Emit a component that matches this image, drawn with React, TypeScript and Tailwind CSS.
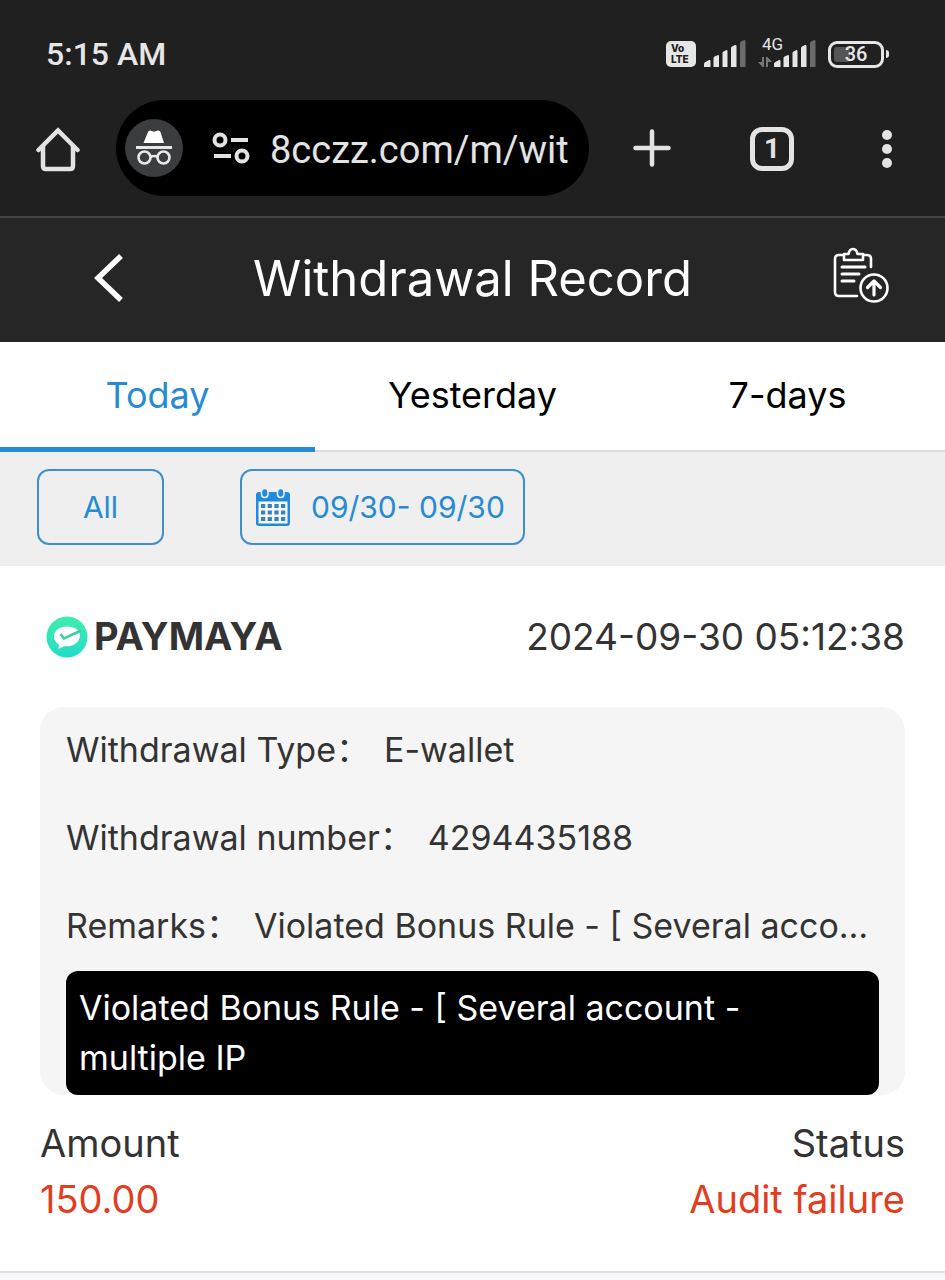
import type { ReactNode } from "react";

function SignalBars() {
  return (
    <svg viewBox="0 0 42 28" className="h-7 w-[42px]" aria-hidden="true">
      <g fill="#e6e6e6">
        <path d="M0 27v-3q0-1 1-1.700l4-2.300q1.500-.5 1.500 1V27z" />
        <path d="M9.500 27V18q0-1 1-1.500l3-1.300q1.500-.4 1.500 1V27z" />
        <path d="M18.500 27V13q0-1 1-1.500l2.500-1.300q1.500-.4 1.500 1V27z" />
        <path d="M27 27V8q0-1 1-1.500L31 5q1.500-.4 1.500 1v21z" />
      </g>
      <path d="M36 27V3q0-1 1-1.500L40 .2q1.500-.4 1.500 1V27z" fill="#6b6b6b" />
    </svg>
  );
}

function VolteBadge() {
  return (
    <span className="flex h-[26px] w-[30px] flex-col items-start rounded-[5px] bg-[#e6e6e6] pt-[2px] pl-[5px] font-['Inter'] text-[10px] leading-[11px] font-extrabold text-[#202020]">
      <span>Vo</span>
      <span>LTE</span>
    </span>
  );
}

function Battery({ level }: { level: number }) {
  return (
    <span className="flex items-center gap-[2px]">
      <span className="flex h-[27px] w-[56px] items-center rounded-[9px] border-3 border-[#e6e6e6] p-[3px]">
        <span className="relative h-full w-full">
          <span
            className="absolute inset-y-0 left-0 rounded-[3px] bg-[#555]"
            style={{ width: `${level}%` }}
          />
          <span className="absolute inset-0 flex items-center justify-center text-[20px] leading-none font-medium">
            {level}
          </span>
        </span>
      </span>
      <span className="h-2 w-[3px] rounded-r-sm bg-[#e6e6e6]" />
    </span>
  );
}

function StatusBar() {
  return (
    <div className="flex h-[100px] items-center justify-between pt-2 pr-14 pl-[46px] font-['Roboto',sans-serif] text-[#e6e6e6]">
      <span className="text-[32px] font-medium">5:15 AM</span>
      <div className="flex items-center">
        <VolteBadge />
        <span className="ml-2">
          <SignalBars />
        </span>
        <span className="relative ml-3 flex items-end">
          <svg viewBox="0 0 14 12" className="h-3 w-[14px]" fill="#777" aria-hidden="true">
            <path d="M4 1h2v10H4.500L0 6h4z" />
            <path d="M8 11h2V6h4L9.500 1H8z" />
          </svg>
          <span className="ml-[2px]">
            <SignalBars />
          </span>
          <span className="absolute -top-1 left-1 text-[17px] leading-none">4G</span>
        </span>
        <span className="ml-3">
          <Battery level={36} />
        </span>
      </div>
    </div>
  );
}

function IncognitoIcon() {
  return (
    <svg viewBox="0 0 58 58" className="size-[58px] shrink-0" aria-hidden="true">
      <circle cx="29" cy="29" r="29" fill="#3b3c3f" />
      <path
        d="M18.500 24l4.300-10.500c.4-1.500 1.700-2.300 3.200-1.800l3.200 1.100 3-1.100c1.600-.5 2.900.2 3.400 1.800L39 24z"
        fill="#fff"
      />
      <path d="M11 27h36v3H11z" fill="#e8e8e8" />
      <g fill="none" stroke="#e8e8e8" strokeWidth="2.600">
        <circle cx="19.500" cy="38.500" r="6" />
        <circle cx="38.500" cy="38.500" r="6" />
        <path d="M25.500 38c2-1.200 5-1.200 7 0" />
      </g>
    </svg>
  );
}

function BrowserBar() {
  return (
    <div className="flex h-[118px] items-start border-b-2 border-[#444] pr-[47px] pl-9 font-['Roboto',sans-serif] text-[#e3e3e3]">
      <button type="button" aria-label="Home" className="mt-[26px] shrink-0">
        <svg viewBox="0 0 44 46" className="h-[46px] w-11" fill="none" stroke="currentColor" strokeWidth="4.500">
          <path d="M2.500 24L22 4.500 41.500 24" strokeLinecap="round" />
          <path d="M7 20v20q0 3 3 3h24q3 0 3-3V20" />
        </svg>
      </button>
      <div className="ml-9 flex h-24 min-w-0 flex-1 items-center overflow-hidden rounded-full bg-black pr-[18px] pl-[9px]">
        <IncognitoIcon />
        <svg
          viewBox="0 0 38 32"
          className="ml-[29px] h-8 w-[38px] shrink-0"
          fill="none"
          stroke="currentColor"
          strokeWidth="4"
          aria-hidden="true"
        >
          <circle cx="8" cy="8" r="5.500" />
          <path d="M19 8h17" />
          <path d="M2 24h17" />
          <circle cx="30" cy="24" r="5.500" />
        </svg>
        <input
          aria-label="Address"
          defaultValue="8cczz.com/m/wit"
          className="ml-5 w-full min-w-0 flex-1 bg-transparent pt-[5px] text-[38px] outline-none"
        />
      </div>
      <button type="button" aria-label="New tab" className="mt-[29px] ml-11 shrink-0">
        <svg viewBox="0 0 38 38" className="size-[38px]" stroke="currentColor" strokeWidth="4.500" strokeLinecap="round">
          <path d="M19 2.500v33M2.500 19h33" />
        </svg>
      </button>
      <button
        type="button"
        aria-label="Open tabs"
        className="mt-[27px] ml-[79px] flex size-11 shrink-0 items-center justify-center rounded-xl border-[5px] border-current text-[28px] leading-none font-bold"
      >
        1
      </button>
      <button type="button" aria-label="More" className="mt-[29px] ml-[82px] shrink-0">
        <svg viewBox="0 0 22 40" className="h-10 w-[22px]" fill="currentColor">
          <circle cx="11" cy="6" r="5" />
          <circle cx="11" cy="20" r="5" />
          <circle cx="11" cy="34" r="5" />
        </svg>
      </button>
    </div>
  );
}

function PageHeader() {
  return (
    <header className="flex h-[124px] items-center justify-between bg-[#262626] pr-14 pb-1 pl-[92px] text-white">
      <button type="button" aria-label="Back" className="w-14">
        <svg viewBox="0 0 32 50" className="h-[50px] w-8" fill="none" stroke="currentColor" strokeWidth="5.500">
          <path d="M29 3L6 25l23 22" />
        </svg>
      </button>
      <h1 className="flex-1 pr-9 text-center text-[49px] leading-none">Withdrawal Record</h1>
      <button type="button" aria-label="Submit record" className="pb-[6px]">
        <svg
          viewBox="0 0 56 56"
          className="size-14"
          fill="none"
          stroke="currentColor"
          strokeWidth="2.600"
          strokeLinecap="round"
          strokeLinejoin="round"
        >
          <path d="M10 8H6q-4 0-4 4v33q0 4 4 4h18" />
          <path d="M30 8h4q4 0 4 4v8" />
          <path d="M11 13V7h4.500c.5-3 2-5 4.500-5s4 2 4.500 5H30v6z" />
          <path d="M9 20h23M9 27h17M9 34h12" strokeWidth="3" />
          <circle cx="41" cy="41" r="13.500" />
          <path d="M41 48V35M34.500 40.500L41 34l6.500 6.500" strokeWidth="3.200" />
        </svg>
      </button>
    </header>
  );
}

const tabs = ["Today", "Yesterday", "7-days"];

function Tabs() {
  return (
    <div role="tablist" className="grid h-[110px] grid-cols-3 border-b-2 border-[#dcdcdc] bg-white text-[36px]">
      {tabs.map((tab, i) => (
        <button
          key={tab}
          type="button"
          role="tab"
          aria-selected={i === 0}
          className="-mb-[2px] border-b-[5px] border-transparent text-black aria-selected:border-[#268bd2] aria-selected:text-[#268bd2]"
        >
          {tab}
        </button>
      ))}
    </div>
  );
}

function CalendarIcon() {
  return (
    <svg viewBox="0 0 36 39" className="h-[39px] w-9" aria-hidden="true">
      <rect x="1" y="4" width="34" height="34" rx="3" fill="#1f8ae0" />
      <rect x="3.500" y="13.500" width="29" height="22" fill="#f3f9fd" />
      <g fill="#1f8ae0" stroke="#efefef" strokeWidth="1.500">
        <rect x="6.500" y="0.500" width="6.500" height="9" rx="3.200" />
        <rect x="22.500" y="0.500" width="6.500" height="9" rx="3.200" />
      </g>
      <g fill="#3d7fb8">
        {[16, 22.5, 29].map((y) =>
          [6, 12.7, 19.4, 26].map((x) => <rect key={`${x}-${y}`} x={x} y={y} width="4.200" height="4" />)
        )}
      </g>
    </svg>
  );
}

function Filters() {
  return (
    <div className="flex h-[114px] items-start gap-[76px] bg-[#efefef] px-[37px] pt-[17px] text-[30px] text-[#268bd2]">
      <button type="button" className="h-[76px] w-[127px] rounded-xl border-2 border-[#3f90ca]">
        All
      </button>
      <button
        type="button"
        className="flex h-[76px] items-center gap-5 rounded-xl border-2 border-[#3f90ca] pr-[18px] pl-[13px]"
      >
        <CalendarIcon />
        09/30- 09/30
      </button>
    </div>
  );
}

function PaymayaLogo() {
  return (
    <svg viewBox="0 0 42 42" className="size-[42px]" aria-hidden="true">
      <defs>
        <linearGradient id="paymaya" x1="0" y1="0" x2="0" y2="1">
          <stop offset="0" stopColor="#43ecae" />
          <stop offset="1" stopColor="#20dcc8" />
        </linearGradient>
      </defs>
      <circle cx="21" cy="21" r="20.500" fill="url(#paymaya)" />
      <path
        d="M21 10.500c-7.500 0-13 4-13 10 0 4 2 6.500 5 8l-.8 4.500 5.800-2.800c8 1 15.500-2.700 16-10.700C34.300 14 28.500 10.500 21 10.500z"
        fill="#fff"
      />
      <path d="M14.500 18l3.500 4.500L35 14.500" fill="none" stroke="#38cfa5" strokeWidth="2.500" />
    </svg>
  );
}

function DetailRow({ label, children }: { label: string; children: ReactNode }) {
  return (
    <div className="flex h-[88px] items-center pb-1">
      <dt className="shrink-0">{label}：</dt>
      <dd className="ml-[14px] min-w-0 truncate">{children}</dd>
    </div>
  );
}

function RecordCard() {
  return (
    <article className="border-b-2 border-[#dfdfe3] bg-white px-10 pb-11 text-[34px] text-[#333]">
      <div className="flex h-[141px] items-center justify-between">
        <h2 className="ml-[6px] flex items-center gap-[6px] text-[38px] font-bold">
          <PaymayaLogo />
          PAYMAYA
        </h2>
        <time dateTime="2024-09-30T05:12:38" className="text-[37px]">
          2024-09-30 05:12:38
        </time>
      </div>
      <div className="rounded-3xl bg-[#f5f5f5] px-[26px]">
        <dl>
          <DetailRow label="Withdrawal Type">E-wallet</DetailRow>
          <DetailRow label="Withdrawal number">4294435188</DetailRow>
          <DetailRow label="Remarks">Violated Bonus Rule - [ Several acco…</DetailRow>
        </dl>
        <p className="rounded-xl bg-black px-[13px] py-3 leading-[50px] text-white">
          Violated Bonus Rule - [ Several account - multiple IP
        </p>
      </div>
      <dl className="mt-5 flex justify-between text-[38px] leading-[56px]">
        <div>
          <dt>Amount</dt>
          <dd className="text-[#e23d20]">150.00</dd>
        </div>
        <div className="text-right">
          <dt>Status</dt>
          <dd className="text-[#e23d20]">Audit failure</dd>
        </div>
      </dl>
    </article>
  );
}

export default function App() {
  return (
    <div className="min-h-screen bg-[#f8f8fa] font-['Inter','Noto_Sans_CJK_SC',sans-serif]">
      <div className="bg-[#202020]">
        <StatusBar />
        <BrowserBar />
      </div>
      <PageHeader />
      <main>
        <Tabs />
        <Filters />
        <RecordCard />
      </main>
    </div>
  );
}
